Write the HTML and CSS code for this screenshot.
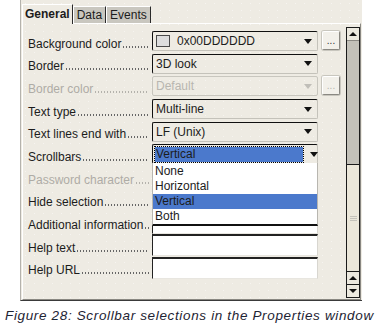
FILE: index.html
```html
<!DOCTYPE html>
<html lang="en">
<head>
  <meta charset="UTF-8">
  <title>Properties - Text Box</title>
  <link rel="stylesheet" href="styles.css">
</head>
<body>
  <div class="window">
    <div class="tabs">
      <div class="tab active">General</div>
      <div class="tab">Data</div>
      <div class="tab">Events</div>
    </div>

    <div class="page">
      <div class="props">
        <div class="row">
          <span class="label">Background color<span class="dots"></span></span>
          <div class="combo">
            <span class="swatch"></span>
            <span class="value">0x00DDDDDD</span>
            <span class="arrow"></span>
          </div>
          <button class="more">...</button>
        </div>
        <div class="row">
          <span class="label">Border<span class="dots"></span></span>
          <div class="combo"><span class="value">3D look</span><span class="arrow"></span></div>
        </div>
        <div class="row disabled">
          <span class="label">Border color<span class="dots"></span></span>
          <div class="combo"><span class="value">Default</span><span class="arrow"></span></div>
          <button class="more">...</button>
        </div>
        <div class="row">
          <span class="label">Text type<span class="dots"></span></span>
          <div class="combo"><span class="value">Multi-line</span><span class="arrow"></span></div>
        </div>
        <div class="row">
          <span class="label">Text lines end with<span class="dots"></span></span>
          <div class="combo"><span class="value">LF (Unix)</span><span class="arrow"></span></div>
        </div>
        <div class="row">
          <span class="label">Scrollbars<span class="dots"></span></span>
          <div class="combo open">
            <span class="value focus">Vertical</span>
            <span class="arrow"></span>
            <ul class="list">
              <li>None</li>
              <li>Horizontal</li>
              <li class="selected">Vertical</li>
              <li>Both</li>
            </ul>
          </div>
        </div>
        <div class="row disabled">
          <span class="label">Password character<span class="dots"></span></span>
          <div class="field"></div>
        </div>
        <div class="row">
          <span class="label">Hide selection<span class="dots"></span></span>
          <div class="combo"><span class="value"></span><span class="arrow"></span></div>
        </div>
        <div class="row">
          <span class="label">Additional information<span class="dots"></span></span>
          <div class="field"></div>
        </div>
        <div class="row">
          <span class="label">Help text<span class="dots"></span></span>
          <div class="field"></div>
        </div>
        <div class="row">
          <span class="label">Help URL<span class="dots"></span></span>
          <div class="field"></div>
        </div>
      </div>

      <div class="scrollbar">
        <div class="sb-btn"><span class="up"></span></div>
        <div class="sb-track"></div>
        <div class="sb-thumb"><span class="grip"></span></div>
        <div class="sb-btn line"><span class="up"></span></div>
        <div class="sb-btn line"><span class="down"></span></div>
      </div>
    </div>
  </div>

  <p class="caption">Figure 28: Scrollbar selections in the Properties window</p>
</body>
</html>
```

FILE: styles.css
```css
:root {
  --panel: #eeebe3;
  --tab-off: #c9c7bf;
  --dark: #1c1c1c;
  --shade: #8a8882;
  --muted: #aeaca6;
  --select: #4b79cc;
}

body {
  margin: 0;
  background: #ffffff;
  font-family: 'Liberation Sans', Arial, sans-serif;
  font-size: 12px;
  color: var(--dark);
}

.window {
  margin-left: 20px;
  width: 342px;
  height: 301px;
  box-sizing: border-box;
  background-color: var(--panel);
  background-image: radial-gradient(circle, rgba(255, 255, 255, 0.45) 0.4px, transparent 0.9px);
  background-size: 9px 7px;
  border-left: 1px solid #b4b2ac;
  border-bottom: 1px solid #3a3a3a;
  display: flex;
  flex-direction: column;
}

/* tabs */

.tabs {
  display: flex;
  align-items: flex-end;
  height: 23px;
  padding-left: 1px;
}

.tab {
  height: 16px;
  line-height: 16px;
  padding: 0 3px;
  background: var(--tab-off);
  border-top: 1px solid #ffffff;
  border-left: 1px solid #ffffff;
  border-right: 1px solid #2a2a2a;
  font-size: 12px;
}

.tab.active {
  height: 19px;
  line-height: 19px;
  padding: 0 2px;
  background: var(--panel);
  font-weight: bold;
  margin-bottom: -1px;
  position: relative;
}

/* page */

.page {
  flex: 1;
  margin-left: 1px;
  width: 339px;
  box-sizing: border-box;
  border-top: 1px solid #ffffff;
  border-left: 1px solid #ffffff;
  border-right: 1px solid var(--shade);
  border-bottom: 1px solid var(--shade);
  display: flex;
}

.props {
  padding: 7px 0 0 5px;
  width: 316px;
}

.row {
  display: grid;
  grid-template-columns: 124px 166px 18px;
  align-items: center;
  height: 22.6px;
}

.label {
  display: flex;
  white-space: nowrap;
  margin-top: 3px;
  line-height: 14px;
  padding-right: 3px;
}

.dots {
  flex: 1;
  align-self: flex-end;
  height: 2px;
  margin: 0 0 3px 1px;
  background: radial-gradient(circle, #666666 0.6px, transparent 1px) 0 0 / 3px 2px repeat-x;
}

.disabled .label {
  color: var(--muted);
}

.disabled .dots {
  background-image: radial-gradient(circle, #b4b2ac 0.6px, transparent 1px);
}

/* combo boxes */

.combo {
  position: relative;
  height: 20px;
  margin-bottom: 2px;
  box-sizing: border-box;
  border: 1px solid #c4c2ba;
  border-top-color: #101010;
  border-left-color: #101010;
  border-radius: 2px;
  display: flex;
  align-items: center;
  padding: 0 4px 0 2px;
}

.value {
  flex: 1;
  padding-left: 1px;
  white-space: nowrap;
}

.disabled .combo {
  border-color: #c8c6be;
}

.disabled .value {
  color: #b8b6b0;
}

.swatch {
  width: 14px;
  height: 12px;
  box-sizing: border-box;
  background: #dddddd;
  border: 1px solid #4a4a4a;
  margin: 0 6px 0 1px;
}

.arrow {
  width: 0;
  height: 0;
  border-top: 5px solid #111111;
  border-left: 4px solid transparent;
  border-right: 4px solid transparent;
  margin-right: 1px;
}

.disabled .arrow {
  border-top-color: #c0beb8;
}

.value.focus {
  flex: 0 0 148px;
  margin-right: 7px;
  height: 15px;
  line-height: 15px;
  box-sizing: border-box;
  background: var(--select);
  outline: 1px dotted #000000;
  padding-left: 1px;
}

.list {
  position: absolute;
  top: 18px;
  left: -1px;
  width: 166px;
  margin: 0;
  padding: 1px 0 0;
  list-style: none;
  background: #ffffff;
  border-left: 1px solid #b8b6b0;
  border-right: 1px solid #b8b6b0;
  border-bottom: 2px solid #111111;
  box-sizing: border-box;
  z-index: 2;
}

.list li {
  height: 15px;
  line-height: 15px;
  padding-left: 2px;
}

.list li.selected {
  background: var(--select);
}

/* text fields */

.field {
  height: 22px;
  margin-bottom: 2px;
  box-sizing: border-box;
  background: #ffffff;
  border-top: 2px solid #222222;
  border-left: 1px solid #222222;
  border-right: 1px solid #d8d6d0;
  border-bottom: 1px solid #e8e6e0;
}

.disabled .field {
  background: transparent;
  border-color: #c8c6be;
}

/* small "..." buttons */

.more {
  width: 18px;
  height: 19px;
  margin: 0 0 3px 4px;
  padding: 0 0 3px;
  font-family: 'Liberation Sans', Arial, sans-serif;
  font-size: 10px;
  line-height: 1;
  display: flex;
  align-items: flex-end;
  justify-content: center;
  color: #333333;
  background: #f2f0ea;
  border: 1px solid #ffffff;
  border-right-color: #8a8882;
  border-bottom-color: #8a8882;
  border-radius: 2px;
  box-shadow: 0 0 0 1px #c8c6be;
}

.disabled .more {
  color: #b8b6b0;
}

/* scrollbar */

.scrollbar {
  width: 14px;
  margin: 3px 0 1px 3px;
  box-sizing: border-box;
  border: 1px solid #1a1a1a;
  display: flex;
  flex-direction: column;
}

.sb-btn {
  height: 12px;
  background: #ece9df;
  display: flex;
  align-items: center;
  justify-content: center;
}

.sb-btn.line {
  border-top: 1px solid #1a1a1a;
}

.sb-track {
  flex: 1;
  background: #c3c1b9;
  border-top: 1px solid #8a8882;
}

.sb-thumb {
  height: 106px;
  background: #ebe7da;
  border-top: 1px solid #1a1a1a;
  display: flex;
  align-items: center;
  justify-content: center;
}

.grip {
  width: 7px;
  height: 5px;
  border-top: 1px solid #c4c2ba;
  border-bottom: 1px solid #c4c2ba;
  background: linear-gradient(#c4c2ba, #c4c2ba) center / 100% 1px no-repeat;
  box-sizing: border-box;
}

.up {
  border-bottom: 4px solid #111111;
  border-left: 4px solid transparent;
  border-right: 4px solid transparent;
}

.down {
  border-top: 4px solid #111111;
  border-left: 4px solid transparent;
  border-right: 4px solid transparent;
}

/* caption */

.caption {
  margin: 7px 0 0 5px;
  font-size: 13.5px;
  font-style: italic;
  letter-spacing: 0.65px;
  color: #1e2433;
}
```
